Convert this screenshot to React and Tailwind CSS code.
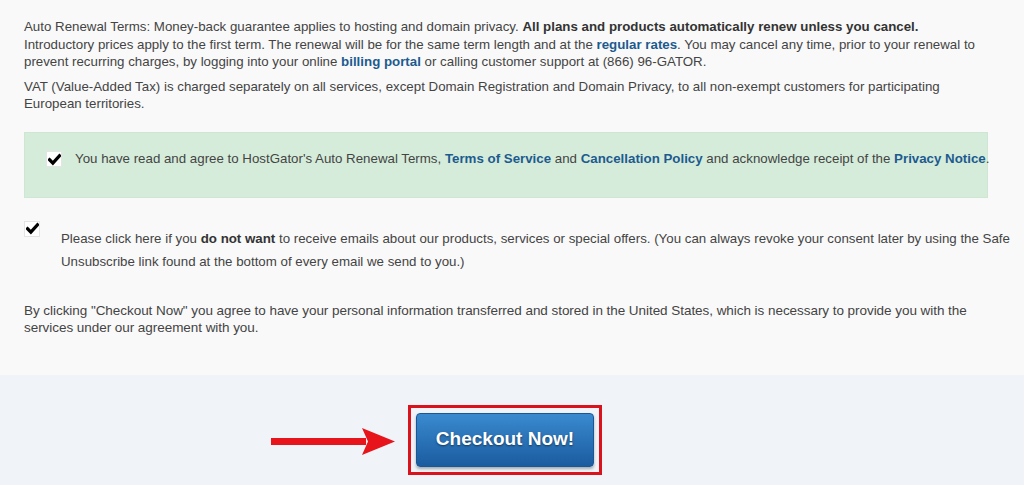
import React from 'react';

function CheckMark({ className = '' }) {
  return (
    <span className={`flex shrink-0 items-center justify-center w-4 h-4 bg-white border border-[#e4e4e4] ${className}`}>
      <svg className="w-[13px] h-[13px]" viewBox="0 0 12 12">
        <path d="M1.4 6.2 L4.5 9.3 L10.6 2.6" fill="none" stroke="#000" strokeWidth={3} strokeLinecap="square" strokeLinejoin="miter" />
      </svg>
    </span>
  );
}

function Link({ children }) {
  return <a className="font-bold text-[#1d5b8f]">{children}</a>;
}

export default function App() {
  return (
    <div className="w-[1024px] h-[485px] overflow-hidden bg-[#f9f9f9] text-[#444] font-['Liberation_Sans',Arial,sans-serif] text-[13.3px]">
      <div className="px-6 pt-[18px]">
        <p className="leading-[17.5px] w-[964px]">
          Auto Renewal Terms: Money-back guarantee applies to hosting and domain privacy.{' '}
          <b className="text-[#333]">All plans and products automatically renew unless you cancel.</b>{' '}
          Introductory prices apply to the first term. The renewal will be for the same term length and at the{' '}
          <Link>regular rates</Link>. You may cancel any time, prior to your renewal to prevent recurring charges, by logging into your online{' '}
          <Link>billing portal</Link> or calling customer support at (866) 96-GATOR.
        </p>
        <p className="leading-[17.5px] mt-[7px] w-[964px]">
          VAT (Value-Added Tax) is charged separately on all services, except Domain Registration and Domain Privacy, to all non-exempt customers for participating European territories.
        </p>

        <div className="mt-[19px] w-[964px] h-[66px] bg-[#d5ecda] border border-[#cfe6d3] flex items-center pl-[21px] pb-[11px]">
          <CheckMark />
          <span className="ml-[13px] whitespace-nowrap">
            You have read and agree to HostGator's Auto Renewal Terms, <Link>Terms of Service</Link> and{' '}
            <Link>Cancellation Policy</Link> and acknowledge receipt of the <Link>Privacy Notice</Link>.
          </span>
        </div>

        <div className="mt-[22px] flex items-start">
          <CheckMark className="mt-[1px]" />
          <p className="ml-[21px] mt-[7px] leading-[23px] w-[960px] shrink-0">
            Please click here if you <b className="text-[#333]">do not want</b> to receive emails about our products, services or special offers. (You can always revoke your consent later by using the Safe Unsubscribe link found at the bottom of every email we send to you.)
          </p>
        </div>

        <p className="mt-[29px] leading-[17.5px] text-[13.5px] tracking-[-0.05px] w-[975px]">
          By clicking "Checkout Now" you agree to have your personal information transferred and stored in the United States, which is necessary to provide you with the services under our agreement with you.
        </p>
      </div>

      <div className="mt-[38px] h-[120px] bg-[#f0f4f8] flex items-start pt-[30px] pl-[271px]">
        <svg className="mt-[22px]" width="125" height="30" viewBox="0 0 125 30">
          <rect x="0" y="11" width="95" height="7" fill="#e8141b" />
          <polygon points="91,1 124,14.5 91,28 97,14.5" fill="#e8141b" />
        </svg>
        <div className="ml-[12px] border-[3px] border-[#d9121b] p-[5px]">
          <button className="w-[178px] h-[54px] rounded-[4px] bg-gradient-to-b from-[#3a8ad0] to-[#1b5c9f] border border-[#1a5797] shadow-[0_2px_3px_rgba(0,0,0,0.3)] text-white font-bold text-[19px] [text-shadow:0_1px_2px_rgba(0,0,0,0.5)] font-['Liberation_Sans',Arial,sans-serif]">
            Checkout Now!
          </button>
        </div>
      </div>
    </div>
  );
}
